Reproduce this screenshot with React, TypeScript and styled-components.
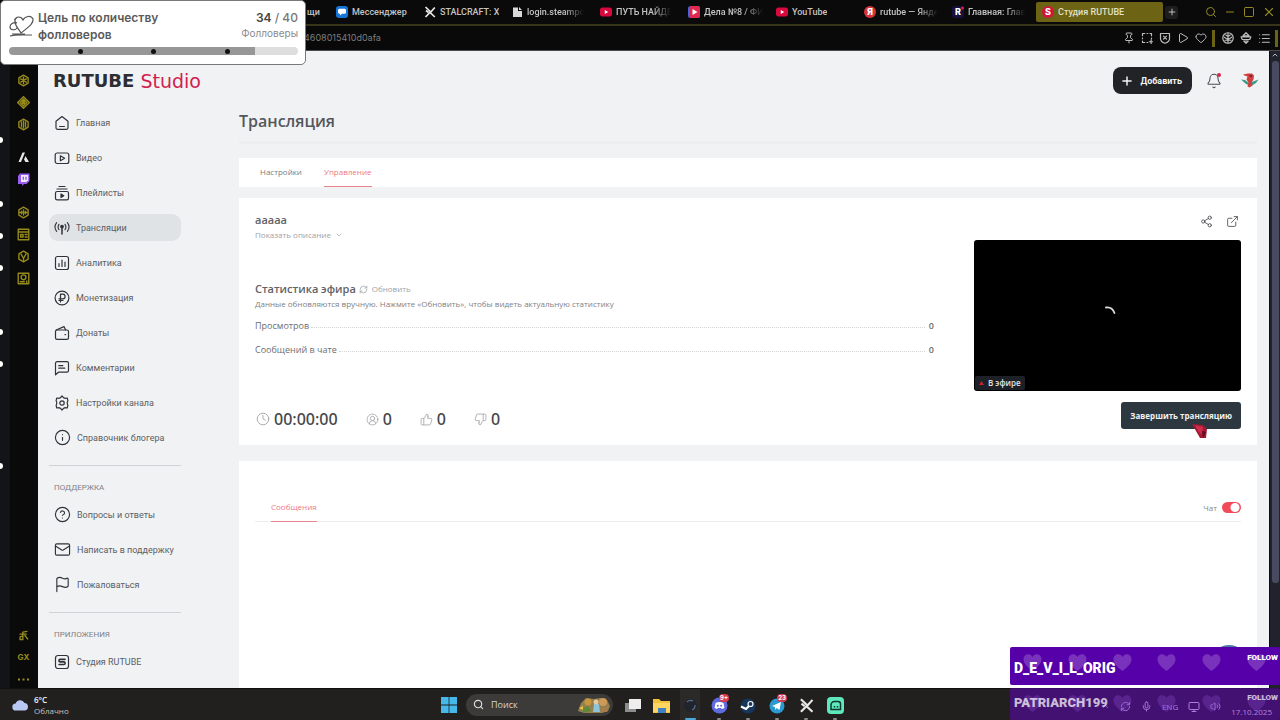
import React from 'react';
import styled, { createGlobalStyle, css } from 'styled-components';
import {
  Plus, Search, Minus, Square, X, Pin, Play, Heart, List, Mail, Flag, Info, CircleHelp,
  Share2, ExternalLink, ChevronDown, ChevronUp, RefreshCw, Clock, CircleUserRound, ThumbsUp, ThumbsDown,
  Bell, Mic, Monitor, Volume2,
} from 'lucide-react';

const ui = "Roboto, 'Liberation Sans', sans-serif";
const text = "'Open Sans', 'Noto Sans', sans-serif";
const inter = "Inter, 'Liberation Sans', sans-serif";

const Global = createGlobalStyle`
  * { box-sizing: border-box; }
  body { margin: 0; background: #0a0a0a; }
  button { border: 0; background: none; padding: 0; font: inherit; color: inherit; cursor: pointer; }
  a { color: inherit; text-decoration: none; }
  ul, h1, h2, h3, p, dl, dd { margin: 0; padding: 0; list-style: none; font-weight: inherit; }
  svg { display: block; flex: none; }
`;

const Screen = styled.div`
  position: relative;
  display: flex;
  flex-direction: column;
  height: 100vh;
  overflow: hidden;
  font-family: ${ui};
`;

/* ---------- browser chrome ---------- */

const TabStrip = styled.nav`
  display: flex;
  align-items: center;
  flex: none;
  height: 26px;
  padding: 0 4px 0 242px;
  background: #0a0a0a;
  border-bottom: 2px solid #37341a;
`;

const BrowserTab = styled.a<{ $active?: boolean; $end?: boolean }>`
  display: flex;
  align-items: center;
  gap: 4px;
  flex: none;
  width: ${p => (p.$active ? 127 : 88)}px;
  height: 20px;
  padding: 0 ${p => (p.$end ? 10 : 6)}px;
  justify-content: ${p => (p.$end ? 'flex-end' : 'flex-start')};
  margin-left: ${p => (p.$active ? 2 : 0)}px;
  border-radius: 2px;
  background: ${p => (p.$active ? '#6c6314' : 'transparent')};
  color: ${p => (p.$active ? '#e4e0c4' : '#c4c4c4')};
  font: 500 9px/12px ${ui};
`;

const TabLabel = styled.span<{ $fade?: boolean }>`
  overflow: hidden;
  white-space: nowrap;
  ${p => p.$fade && css`mask-image: linear-gradient(90deg, #000 65%, transparent 98%);`}
`;

const NewTab = styled.button`
  display: grid;
  place-items: center;
  width: 13px;
  height: 13px;
  margin-left: 2px;
  border-radius: 3px;
  background: #1d1d1d;
  color: #d8d8d8;
`;

const WindowControls = styled.div`
  display: flex;
  align-items: center;
  gap: 7px;
  margin-left: auto;
  color: #948a1f;
`;

const AddressBar = styled.div`
  display: flex;
  align-items: center;
  flex: none;
  height: 25px;
  padding: 0 2px 0 304px;
  background: #090909;
  border-bottom: 1px solid #4a4b4d;
  color: #7d7d7d;
  font: 400 9px/12px ${inter};
`;

const AddressTools = styled.div`
  display: flex;
  align-items: center;
  gap: 6px;
  margin-left: auto;
  color: #bdbdbd;
`;

const ToolSplit = styled.span`
  width: 3px;
  height: 17px;
  margin: 0 1px 0 -1px;
  background: #6b6316;
  &:last-child { margin: 0 0 0 -2px; }
`;

const Work = styled.div`
  display: flex;
  flex: 1;
  min-height: 0;
`;

const Edge = styled.div`
  flex: none;
  width: 10px;
  padding-top: 86px;
  background: #131417;
`;

const EdgeDot = styled.div<{ $gap: number }>`
  width: 3px;
  height: 6px;
  margin-bottom: ${p => p.$gap}px;
  border-radius: 0 3px 3px 0;
  background: #fff;
`;

const Rail = styled.aside`
  display: flex;
  flex-direction: column;
  align-items: center;
  flex: none;
  width: 28px;
  padding: 23px 1px 2px 0;
  background: #0a0a0a;
  color: #968c1c;
`;

const RailGroup = styled.div<{ $bottom?: boolean }>`
  display: flex;
  flex-direction: column;
  gap: 9px;
  margin: ${p => (p.$bottom ? 'auto 0 0' : '0 0 20px')};
`;

const RailButton = styled.button`
  display: grid;
  place-items: center;
  width: 13px;
  height: 13px;
  font: 700 8px/13px ${inter};
`;

const ScrollTrack = styled.div`
  display: flex;
  flex-direction: column;
  align-items: center;
  flex: none;
  width: 11px;
  background: #20222c;
  border-left: 1px solid #0b0c10;
  color: #b5b5bd;
`;

const ScrollThumb = styled.div`
  width: 7px;
  height: 522px;
  margin-top: 2px;
  border-radius: 3px;
  background: #484a60;
`;

/* ---------- studio page ---------- */

const Page = styled.div`
  position: relative;
  display: flex;
  flex: 1;
  min-width: 0;
  background: #f1f2f4;
  color: #5c5e63;
`;

const SideNav = styled.nav`
  display: flex;
  flex-direction: column;
  flex: none;
  width: 201px;
  padding: 20px 58px 0 11px;
`;

const Logo = styled.a`
  display: flex;
  align-items: center;
  height: 20px;
  padding-left: 4px;
  margin-bottom: 18px;
  font-family: 'DejaVu Sans', sans-serif;
  line-height: 20px;
  white-space: nowrap;
  color: #2c2e33;
`;
const LogoMain = styled.span`font-size: 18px; font-weight: 700;`;
const LogoDot = styled.span`
  width: 3px;
  height: 3px;
  margin: 0 4px 12px 2px;
  background: #d0214f;
`;
const LogoSub = styled.span`font-size: 19px; color: #d0214f;`;

const NavList = styled.ul`
  display: flex;
  flex-direction: column;
  gap: 8px;
`;

const NavItem = styled.a<{ $active?: boolean }>`
  display: flex;
  align-items: center;
  gap: 6px;
  height: 27px;
  padding-left: 5px;
  border-radius: 9px;
  white-space: nowrap;
  font-size: 9px;
  background: ${p => (p.$active ? '#dfe3e6' : 'transparent')};
  svg { color: #303238; }
`;

const NavHeading = styled.h3`
  margin: 16px 0 7px;
  padding: 0 5px;
  font-size: 8px;
  line-height: 12px;
  color: #7f8186;
`;

const NavRule = styled.hr`
  width: 100%;
  height: 1px;
  margin: 14px 0 0;
  border: 0;
  background: #d0d2d6;
`;

const Main = styled.main`
  display: flex;
  flex-direction: column;
  flex: 1;
  min-width: 0;
  padding: 16px 12px 0 0;
`;

const TopBar = styled.header`
  display: flex;
  align-items: center;
  justify-content: flex-end;
  gap: 18px;
  height: 27px;
  margin-right: -2px;
`;

const AddButton = styled.button`
  display: flex;
  align-items: center;
  gap: 6px;
  height: 27px;
  margin-right: -5px;
  padding: 0 10px 0 7px;
  border-radius: 8px;
  background: #212327;
  color: #f5f5f5;
  font: 700 9px/14px ${ui};
`;

const IconButton = styled.button`
  display: grid;
  place-items: center;
  position: relative;
  width: 18px;
  height: 18px;
  color: #4c4e54;
`;

const BellDot = styled.span`
  position: absolute;
  top: 1px;
  right: 2px;
  width: 4px;
  height: 4px;
  border-radius: 50%;
  background: #d32747;
`;

const PageTitle = styled.h1`
  margin-top: 15px;
  padding-bottom: 8px;
  border-bottom: 3px solid #edeef0;
  font: 600 16px/24px ${text};
  color: #55575c;
`;

const Card = styled.section`
  background: #fff;
  font-family: ${text};
`;

const TabCard = styled(Card)`
  display: flex;
  gap: 22px;
  margin-top: 14px;
  height: 29px;
  padding: 0 21px;
`;

const PageTab = styled.button<{ $active?: boolean }>`
  height: 29px;
  font: 400 8px/12px ${text};
  color: ${p => (p.$active ? '#ee7a82' : '#7a7c80')};
  border-bottom: 1px solid ${p => (p.$active ? '#e8858c' : 'transparent')};
`;

const StreamCard = styled(Card)`
  display: flex;
  gap: 40px;
  margin-top: 11px;
  padding: 14px 16px;
`;

const Details = styled.div`
  flex: 1;
  min-width: 0;
`;

const StreamName = styled.h2`
  font: 600 11px/16px ${text};
  color: #606266;
`;

const Quiet = styled.button`
  display: flex;
  align-items: center;
  gap: 4px;
  font: 400 8px/14px ${text};
  color: #a0a2a6;
`;

const StatHead = styled.div`
  display: flex;
  align-items: center;
  gap: 3px;
  margin-top: 39px;
  h3 { font: 600 11px/16px ${text}; color: #606266; }
`;

const Hint = styled.p`
  font-size: 8px;
  line-height: 14px;
  color: #7f8185;
`;

const Stats = styled.dl`
  display: flex;
  flex-direction: column;
  gap: 4px;
  margin-top: 4px;
`;

const StatRow = styled.div`
  display: flex;
  align-items: center;
  height: 20px;
  font-size: 9px;
  color: #6c6e72;
`;

const Leader = styled.span`
  flex: 1;
  height: 6px;
  margin: 0 4px 0 2px;
  border-bottom: 1px dotted #d2d4d6;
`;

const StatValue = styled.dd`
  font-weight: 600;
`;

const Metrics = styled.div`
  display: flex;
  gap: 28px;
  margin-top: 48px;
  padding-left: 1px;
`;

const Metric = styled.span`
  display: flex;
  align-items: center;
  gap: 4px;
  font: 500 16px/24px 'Noto Sans', ${text};
  color: #45474b;
  svg { color: #a2a4a8; }
`;

const PreviewCol = styled.div`
  display: flex;
  flex-direction: column;
  align-items: flex-end;
  flex: none;
  width: 267px;
`;

const PreviewTools = styled.div`
  display: flex;
  gap: 8px;
  height: 28px;
`;

const Player = styled.div`
  position: relative;
  display: grid;
  place-items: center;
  width: 100%;
  height: 151px;
  padding: 0 0 9px 4px;
  border-radius: 3px;
  background: #000;
`;

const LiveBadge = styled.span`
  position: absolute;
  left: 1px;
  bottom: 1px;
  display: flex;
  align-items: center;
  gap: 3px;
  height: 14px;
  padding: 0 4px 0 3px;
  border-radius: 2px;
  background: #1d2026;
  color: #e2e2e2;
  font: 600 8px/14px ${text};
`;

const StopButton = styled.button`
  height: 27px;
  margin-top: 11px;
  padding: 0 9px;
  border-radius: 3px;
  background: #2c373f;
  color: #f0f2f3;
  font: 700 8px/14px ${text};
  white-space: nowrap;
`;

const ChatCard = styled(Card)`
  flex: 1;
  margin-top: 16px;
  padding: 32px 16px 0;
`;

const ChatHead = styled.div`
  display: flex;
  justify-content: space-between;
  padding-left: 16px;
  border-bottom: 1px solid #eceded;
`;

const ChatTab = styled(PageTab)`
  margin-bottom: -1px;
`;

const Toggle = styled.label`
  display: flex;
  align-items: center;
  gap: 5px;
  font-size: 8px;
  color: #86888c;
  input {
    appearance: none;
    width: 19px;
    height: 11px;
    margin: 0;
    border-radius: 6px;
    background: radial-gradient(circle at 13px 50%, #fff 4px, #ef4b59 5px);
  }
`;

const HelpBubble = styled.button`
  position: absolute;
  right: 22px;
  bottom: 7px;
  width: 36px;
  height: 36px;
  border-radius: 50%;
  background: #4f7aa8;
`;

/* ---------- taskbar ---------- */

const Taskbar = styled.footer`
  display: grid;
  grid-template-columns: 1fr auto 1fr;
  align-items: center;
  flex: none;
  height: 32px;
  padding: 0 8px 0 12px;
  background: #22201f;
  border-top: 1px solid #111;
  font-family: ${text};
`;

const Weather = styled.div`
  display: flex;
  align-items: center;
  gap: 5px;
  font-size: 8px;
  line-height: 11px;
  color: #c2c2c2;
  strong { display: block; font-weight: 600; color: #f2f2f2; }
`;

const Dock = styled.div`
  display: flex;
  align-items: center;
  gap: 9px;
  padding-left: 2px;
`;

const DockSearch = styled.label`
  display: flex;
  align-items: center;
  gap: 7px;
  width: 147px;
  height: 22px;
  padding: 0 2px 0 7px;
  border-radius: 11px;
  background: #3d3b3a;
  color: #dedede;
  input {
    flex: 1;
    min-width: 0;
    padding: 0;
    border: 0;
    background: none;
    outline: 0;
    font: 400 9px/14px ${text};
    color: #dedede;
    &::placeholder { color: #d4d4d4; opacity: 1; }
  }
`;

const DockApps = styled.div`
  display: flex;
  gap: 9px;
`;

const DockApp = styled.button<{ $mark?: 'dot' | 'active' }>`
  position: relative;
  display: grid;
  place-items: center;
  width: 20px;
  height: 31px;
  padding-top: 2px;
  background: ${p => (p.$mark === 'active' ? '#2b2a29' : 'transparent')};
  &::after {
    content: '';
    position: absolute;
    bottom: 0;
    width: ${p => (p.$mark === 'active' ? 11 : 4)}px;
    height: 2px;
    border-radius: 1px;
    background: ${p => (p.$mark === 'active' ? '#4aa9d8' : p.$mark ? '#8b8b8b' : 'transparent')};
  }
`;

const Count = styled.span`
  position: absolute;
  top: 5px;
  right: 0;
  padding: 0 1px;
  border-radius: 4px;
  background: #d83a4c;
  color: #fff;
  font: 700 6px/8px ${inter};
`;

const Tray = styled.div`
  display: flex;
  align-items: center;
  align-self: stretch;
  justify-content: flex-end;
  gap: 10px;
  padding-top: 4px;
  color: #fff;
  font-size: 8px;
`;

const TrayDate = styled.time`
  align-self: flex-end;
  padding-bottom: 2px;
  line-height: 12px;
`;

/* ---------- stream overlays ---------- */

const Goal = styled.section`
  position: absolute;
  top: 0;
  left: 0;
  width: 306px;
  height: 65px;
  padding: 8px 7px 0 8px;
  border: 1px solid #77797b;
  border-radius: 5px;
  background: #fff;
  font: 500 12px/17px ${inter};
  color: #5a5a5a;
`;

const GoalRow = styled.div`
  display: flex;
  gap: 3px;
`;

const GoalTitle = styled.p`
  flex: 1;
  font-weight: 600;
`;

const GoalCount = styled.p`
  text-align: right;
  color: #777;
  strong { font-weight: 600; color: #444; }
  small { display: block; font-size: 10px; line-height: 15px; font-weight: 400; color: #8a8a8a; }
`;

const GoalBar = styled.div`
  display: flex;
  align-items: center;
  justify-content: space-evenly;
  height: 8px;
  margin-top: 4px;
  border-radius: 4px;
  background: linear-gradient(90deg, #979797 85%, #dedede 85%);
`;

const GoalMark = styled.span`
  width: 5px;
  height: 5px;
  border-radius: 50%;
  background: #111;
`;

const Alerts = styled.section`
  position: absolute;
  right: 0;
  bottom: 0;
  width: 270px;
  display: flex;
  flex-direction: column;
  gap: 3px;
  font-family: ${ui};
`;

const Alert = styled.article<{ $fading?: boolean }>`
  position: relative;
  display: flex;
  align-items: flex-start;
  justify-content: space-between;
  height: ${p => (p.$fading ? 32 : 38)}px;
  padding: 4px 2px 0 4px;
  border-radius: 2px;
  color: ${p => (p.$fading ? 'rgba(255,255,255,.72)' : '#fff')};
  background: ${p => (p.$fading ? 'rgba(96,4,190,.52)' : '#5500a8')};
`;

const AlertName = styled.strong<{ $low?: boolean }>`
  position: relative;
  font-size: ${p => (p.$low ? 14 : 13)}px;
  font-weight: 900;
  line-height: 18px;
  padding-top: ${p => (p.$low ? 8 : 2)}px;
`;

const AlertKind = styled.b<{ $tight?: boolean }>`
  position: relative;
  font-size: 8px;
  font-weight: 900;
  line-height: ${p => (p.$tight ? 12 : 14)}px;
`;

const Hearts = styled.span<{ $faint?: boolean }>`
  position: absolute;
  inset: 6px 14px auto 13px;
  display: flex;
  justify-content: space-between;
  color: #8848c4;
  opacity: ${p => (p.$faint ? 0.35 : 0.7)};
`;

const Pointer = styled.svg`
  position: absolute;
  left: 1190px;
  top: 422px;
`;

/* ---------- drawings ---------- */

const Line: React.FC<{ size?: number; w?: number; children: React.ReactNode }> = ({ size = 16, w = 1.2, children }) => (
  <svg width={size} height={size} viewBox="0 0 16 16" fill="none" stroke="currentColor" strokeWidth={w} strokeLinecap="round" strokeLinejoin="round">
    {children}
  </svg>
);

const HomeIcon = () => <Line><path d="M2 6.2 8 1.6l6 4.6v6.6a1.6 1.6 0 0 1-1.6 1.6H3.6A1.6 1.6 0 0 1 2 12.8zM5.6 11.500h4.8" /></Line>;
const VideoIcon = () => <Line><rect x="1.200" y="3" width="13.600" height="10.500" rx="2" /><path d="M6.400 5.800v5l4.200-2.500z" /></Line>;
const PlaylistIcon = () => <Line><path d="M5 1.500h6M3 4h10" /><rect x="1.500" y="6.500" width="13" height="8.300" rx="1.600" /><path d="M7 9v3.400L9.800 10.700z" fill="currentColor" /></Line>;
const CastIcon = () => (
  <Line w={1.1}>
    <path d="M2.600 2.600a7.400 7.400 0 0 0 0 8.800M13.400 2.600a7.400 7.400 0 0 1 0 8.800M5 4.400a4.400 4.400 0 0 0 0 5.200M11 4.400a4.400 4.400 0 0 1 0 5.200" />
    <path d="M8 7v7" strokeWidth="1.500" />
    <circle cx="8" cy="6.600" r="1.300" fill="currentColor" />
  </Line>
);
const ChartIcon = () => <Line><rect x="1.500" y="1.500" width="13" height="13" rx="2" /><path d="M5 8.500v3M8 5v6.500M11 7v4.500" /></Line>;
const RubleIcon = () => <Line><circle cx="8" cy="8" r="6.900" /><path d="M6.500 12V4.200h2.300a2.200 2.200 0 0 1 0 4.600H5M5 10.500h4" /></Line>;
const WalletIcon = () => <Line><rect x="1.500" y="5" width="13" height="9.300" rx="1.600" /><path d="M2.200 5 10 1.600 11.600 5M11 9.600h.6" /></Line>;
const CommentIcon = () => <Line><path d="M1.500 14.800V3.200a1.600 1.600 0 0 1 1.600-1.600h9.800a1.600 1.600 0 0 1 1.600 1.600v7.400a1.600 1.600 0 0 1-1.600 1.600H4.500zM4.800 5.700h4M4.800 8.200h6" /></Line>;
const GearIcon = () => (
  <Line>
    <path d="M6.500 2.600 8 1l1.500 1.600 1.300.7 2.400-.3.700 2.600-.6 1.500v1.800l.6 1.500-.7 2.600-2.400-.3-1.300.7L8 15l-1.500-1.600-1.300-.7-2.400.3-.7-2.600.6-1.500V7.100l-.6-1.500.7-2.600 2.400.3z" />
    <circle cx="8" cy="8" r="2.200" />
  </Line>
);
const StudioIcon = () => <Line><rect x="1.500" y="1.500" width="13" height="13" rx="2.500" /><path d="M11 5.400H6.200a1.200 1.200 0 0 0 0 2.500h3.600a1.200 1.200 0 0 1 0 2.600H5" strokeWidth="1.600" /></Line>;

const YtIcon = () => <svg width="12" height="12" viewBox="0 0 12 12"><rect y="1.500" width="12" height="9" rx="2.500" fill="#d8093c" /><path d="M4.800 4v4l3.400-2z" fill="#fff" /></svg>;
const ChatAppIcon = () => <svg width="12" height="12" viewBox="0 0 12 12"><rect width="12" height="12" rx="3" fill="#1676d8" /><path d="M3.500 2.800h5a1.500 1.500 0 0 1 1.500 1.500v2a1.500 1.500 0 0 1-1.500 1.500H6L4 9.500V7.800a1.800 1.800 0 0 1-2-1.500v-2a1.500 1.500 0 0 1 1.500-1.500z" fill="#fff" /></svg>;
const CrossIcon = ({ size = 12 }: { size?: number }) => <svg width={size} height={size} viewBox="0 0 12 12"><path d="M1.500 1 6.800 6l4-4.500M10.800 11 6 6.500 1.500 11M2 4.500l2.500 2" stroke="#e8e8e8" strokeWidth="1.700" fill="none" /></svg>;
const FileIcon = () => <svg width="11" height="12" viewBox="0 0 11 12"><path d="M1 1.500h5V5h4v6H1zM7 1l3 3H7z" fill="#d8d8d8" /></svg>;
const FilmIcon = () => <svg width="12" height="12" viewBox="0 0 12 12"><rect width="12" height="12" rx="2.500" fill="#4a63d8" /><rect x="1.500" width="10.500" height="12" rx="2.500" fill="#e02850" /><path d="M4.500 3v6l5-3z" fill="#fff" /></svg>;
const RoundLetter = ({ fill, square, letter }: { fill: string; square?: boolean; letter: string }) => (
  <svg width="12" height="12" viewBox="0 0 12 12"><rect width="12" height="12" rx={square ? 3 : 6} fill={fill} /><text x="6" y="9.300" textAnchor="middle" fontFamily="Inter" fontWeight="800" fontSize="9" fill="#fff">{letter}</text>{square && <circle cx="10.500" cy="2" r="1.500" fill="#e0203c" />}</svg>
);

const Hex = <path d="M8 1.500 13.700 4.800v6.400L8 14.500l-5.700-3.300V4.800z" />;
const railTop = [
  <Line size={13} w={1.7}>{Hex}<path d="M8 4v8M4.500 6l7 4M11.500 6l-7 4" /></Line>,
  <Line size={13} w={1.7}><path d="M8 .8 15.200 8 8 15.200.800 8z" /><path d="M8 3.800 12.200 8 8 12.200 3.800 8z" /><circle cx="8" cy="8" r="1.600" fill="currentColor" /></Line>,
  <Line size={13} w={1.7}>{Hex}<path d="M8 3.500v9M5.500 5v6M10.500 5v6" /></Line>,
];
const railApps = [
  <svg width="13" height="13" viewBox="0 0 13 13"><path d="M5.500 1.500h2.500L4 11H1.500zM8.500 5l3.500 6H8.500L7 8.500z" fill="#e8e8e8" /></svg>,
  <svg width="13" height="13" viewBox="0 0 13 13"><path d="M3 .5h9.500V8L9.500 11H7l-2 2v-2H1V3z" fill="#9a5cf0" /><path d="M4 2h7.200v5.500L9 9H4z" fill="#f0e8ff" /><path d="M6.300 3.700v3M9 3.700v3" stroke="#7a3ad8" strokeWidth="1.100" /></svg>,
];
const railTools = [
  <Line size={13} w={1.7}>{Hex}<path d="M3 8h10M8 5v6M5.500 6.500v3M10.500 6.500v3" /></Line>,
  <Line size={13} w={1.7}><rect x="1.500" y="1.500" width="13" height="13" /><path d="M2 5h12M4.500 8h3v3h-3zM10 8h2.500M10 11h2.500" /></Line>,
  <Line size={13} w={1.7}>{Hex}<path d="M5 5l3 5.500L11 5M8 10.500V13" /></Line>,
  <Line size={13} w={1.7}><rect x="1.500" y="1.500" width="13" height="13" /><circle cx="8" cy="6.500" r="3" /><path d="M4 12h5M12 11v2" /></Line>,
];
const railBottom = [
  <Line size={11} w={2}><path d="M7 12V3l6-1M3 6h9M10 8l4 5M6 9l-3 1v4h4v-3" /></Line>,
  'GX',
  <svg width="11" height="3" viewBox="0 0 11 3"><path d="M0 .5h2v2H0zM4.500.5h2v2h-2zM9 .5h2v2H9z" fill="currentColor" /></svg>,
];

const HeartShape = () => (
  <svg width="19" height="19" viewBox="0 0 19 19"><path d="M9.500 18C4 13.500.500 10.500.500 6.200.500 3.200 2.600 1.200 5.100 1.200c1.900 0 3.400 1 4.400 2.700 1-1.700 2.500-2.700 4.400-2.700 2.500 0 4.600 2 4.600 5 0 4.300-3.500 7.300-9 11.800z" fill="currentColor" /></svg>
);

/* ---------- data ---------- */

const browserTabs: { icon: React.ReactNode; label: string; fade?: boolean }[] = [
  { icon: <ChatAppIcon />, label: 'Мессенджер' },
  { icon: <CrossIcon />, label: 'STALCRAFT: X' },
  { icon: <FileIcon />, label: 'login.steampo', fade: true },
  { icon: <YtIcon />, label: 'ПУТЬ НАЙДЕ', fade: true },
  { icon: <FilmIcon />, label: 'Дела №8 / ФИ', fade: true },
  { icon: <YtIcon />, label: 'YouTube' },
  { icon: <RoundLetter fill="#d8323c" letter="Я" />, label: 'rutube — Янде', fade: true },
  { icon: <RoundLetter fill="#17103c" square letter="R" />, label: 'Главная: Глав', fade: true },
];

const mainNav: [React.ReactNode, string][] = [
  [<HomeIcon />, 'Главная'],
  [<VideoIcon />, 'Видео'],
  [<PlaylistIcon />, 'Плейлисты'],
  [<CastIcon />, 'Трансляции'],
  [<ChartIcon />, 'Аналитика'],
  [<RubleIcon />, 'Монетизация'],
  [<WalletIcon />, 'Донаты'],
  [<CommentIcon />, 'Комментарии'],
  [<GearIcon />, 'Настройки канала'],
  [<Info size={17} strokeWidth={1.6} />, 'Справочник блогера'],
];

const supportNav: [React.ReactNode, string][] = [
  [<CircleHelp size={17} strokeWidth={1.6} />, 'Вопросы и ответы'],
  [<Mail size={17} strokeWidth={1.6} />, 'Написать в поддержку'],
  [<Flag size={17} strokeWidth={1.6} />, 'Пожаловаться'],
];

const edgeGaps = [58, 26, 26, 58, 26, 96, 0];

const NavGroup = ({ items, active }: { items: [React.ReactNode, string][]; active?: string }) => (
  <NavList>
    {items.map(([icon, label]) => (
      <li key={label}><NavItem href="#" $active={label === active}>{icon}{label}</NavItem></li>
    ))}
  </NavList>
);

const RailButtons = ({ items, bottom }: { items: React.ReactNode[]; bottom?: boolean }) => (
  <RailGroup $bottom={bottom}>
    {items.map((icon, i) => <RailButton key={i}>{icon}</RailButton>)}
  </RailGroup>
);

export default function App() {
  return (
    <Screen>
      <Global />
      <TabStrip>
        <BrowserTab href="#" $end><TabLabel>щи</TabLabel></BrowserTab>
        {browserTabs.map((t, i) => (
          <BrowserTab href="#" key={i}>{t.icon}<TabLabel $fade={t.fade}>{t.label}</TabLabel></BrowserTab>
        ))}
        <BrowserTab href="#" $active><RoundLetter fill="#d0143c" letter="S" /><TabLabel>Студия RUTUBE</TabLabel></BrowserTab>
        <NewTab aria-label="Новая вкладка"><Plus size={10} /></NewTab>
        <WindowControls>
          <button aria-label="Поиск"><Search size={12} /></button>
          <button aria-label="Свернуть"><Minus size={12} /></button>
          <button aria-label="Развернуть"><Square size={12} /></button>
          <button aria-label="Закрыть"><X size={14} /></button>
        </WindowControls>
      </TabStrip>
      <AddressBar>
        4608015410d0afa
        <AddressTools>
          <Pin size={12} />
          <Line size={12} w={1.6}><path d="M2 5V2h3M8 2h1M12 2h2v3M14 8v1M2 8v1M2 12v2h3M8 14h1M11 13h5M13.500 10.500v5" /></Line>
          <Line size={12} w={1.6}><path d="M2 2h12v7c0 3-3 5-6 6-3-1-6-3-6-6zM6 5.500l4 4M10 5.500l-4 4" /></Line>
          <Play size={12} />
          <Heart size={12} />
          <ToolSplit />
          <Line size={12} w={1.6}><circle cx="8" cy="8" r="7" /><path d="M8 1.500v13M3 7l5 3 5-3M4 11h8M5 4l3 2 3-2" /></Line>
          <Line size={12} w={1.6}><path d="M8 1 12 5H4zM1.500 6.500h13L13 10H3zM5 12h6l-3 3z" /></Line>
          <List size={13} />
          <ToolSplit />
        </AddressTools>
      </AddressBar>

      <Work>
        <Edge>{edgeGaps.map((gap, i) => <EdgeDot key={i} $gap={gap} />)}</Edge>
        <Rail>
          <RailButtons items={railTop} />
          <RailButtons items={railApps} />
          <RailButtons items={railTools} />
          <RailButtons items={railBottom} bottom />
        </Rail>

        <Page>
          <SideNav>
            <Logo href="#"><LogoMain>RUTUBE</LogoMain><LogoDot /><LogoSub>Studio</LogoSub></Logo>
            <NavGroup items={mainNav} active="Трансляции" />
            <NavRule />
            <NavHeading>ПОДДЕРЖКА</NavHeading>
            <NavGroup items={supportNav} />
            <NavRule />
            <NavHeading>ПРИЛОЖЕНИЯ</NavHeading>
            <NavGroup items={[[<StudioIcon />, 'Студия RUTUBE']]} />
          </SideNav>

          <Main>
            <TopBar>
              <AddButton><Plus size={14} strokeWidth={2.5} />Добавить</AddButton>
              <IconButton aria-label="Уведомления"><Bell size={16} strokeWidth={1.6} /><BellDot /></IconButton>
              <IconButton aria-label="Профиль">
                <svg width="18" height="18" viewBox="0 0 18 18">
                  <path d="M0 7.500 4 8l4 3 9.500-3.500L15 11l-5 3-5-2z" fill="#3c9a86" />
                  <path d="M2 2.500 7 1.500h4l2 2-.5 4-2 3 1 3-3 2-2-1 1-4-2-3 1-3-3-1z" fill="#cf3f3d" />
                  <path d="M8 3h3v2H9z" fill="#7d2530" />
                </svg>
              </IconButton>
            </TopBar>
            <PageTitle>Трансляция</PageTitle>
            <TabCard>
              <PageTab>Настройки</PageTab>
              <PageTab $active>Управление</PageTab>
            </TabCard>

            <StreamCard>
              <Details>
                <StreamName>ааааа</StreamName>
                <Quiet>Показать описание <ChevronDown size={8} /></Quiet>
                <StatHead>
                  <h3>Статистика эфира</h3>
                  <Quiet><RefreshCw size={9} />Обновить</Quiet>
                </StatHead>
                <Hint>Данные обновляются вручную. Нажмите «Обновить», чтобы видеть актуальную статистику</Hint>
                <Stats>
                  <StatRow><dt>Просмотров</dt><Leader /><StatValue>0</StatValue></StatRow>
                  <StatRow><dt>Сообщений в чате</dt><Leader /><StatValue>0</StatValue></StatRow>
                </Stats>
                <Metrics>
                  <Metric><Clock size={14} strokeWidth={1.5} />00:00:00</Metric>
                  <Metric><CircleUserRound size={13} strokeWidth={1.5} />0</Metric>
                  <Metric><ThumbsUp size={13} strokeWidth={1.5} />0</Metric>
                  <Metric><ThumbsDown size={13} strokeWidth={1.5} />0</Metric>
                </Metrics>
              </Details>
              <PreviewCol>
                <PreviewTools>
                  <IconButton aria-label="Поделиться"><Share2 size={13} strokeWidth={1.6} /></IconButton>
                  <IconButton aria-label="Открыть"><ExternalLink size={13} strokeWidth={1.6} /></IconButton>
                </PreviewTools>
                <Player>
                  <svg width="14" height="14" viewBox="0 0 14 14"><path d="M3 3.500Q9 2.500 11.500 9" stroke="#ddd" strokeWidth="1.800" fill="none" strokeLinecap="round" /></svg>
                  <LiveBadge><svg width="7" height="6" viewBox="0 0 7 6"><path d="M3.500 1 6 5H1z" fill="#c8202c" /></svg>В эфире</LiveBadge>
                </Player>
                <StopButton>Завершить трансляцию</StopButton>
              </PreviewCol>
            </StreamCard>

            <ChatCard>
              <ChatHead>
                <ChatTab $active>Сообщения</ChatTab>
                <Toggle>Чат<input type="checkbox" defaultChecked /></Toggle>
              </ChatHead>
            </ChatCard>
          </Main>
          <HelpBubble aria-label="Помощь" />
        </Page>
        <ScrollTrack><ChevronUp size={8} strokeWidth={3} /><ScrollThumb /></ScrollTrack>
      </Work>

      <Taskbar>
        <Weather>
          <svg width="17" height="12" viewBox="0 0 17 12"><path d="M4 11.500a3.500 3.500 0 0 1-.3-7A4.800 4.800 0 0 1 12.500 4a3.800 3.800 0 0 1 .5 7.500z" fill="#b9c8f4" /></svg>
          <div><strong>6°C</strong>Облачно</div>
        </Weather>
        <Dock>
          <button aria-label="Пуск">
            <svg width="16" height="16" viewBox="0 0 16 16"><path d="M0 0h7.600v7.600H0zM8.400 0H16v7.600H8.400zM0 8.400h7.600V16H0zM8.400 8.400H16V16H8.400z" fill="#45b9ea" /></svg>
          </button>
          <DockSearch>
            <Search size={11} strokeWidth={2.5} />
            <input placeholder="Поиск" aria-label="Поиск" />
            <svg width="34" height="18" viewBox="0 0 34 18">
              <path d="M1 15 4 7l5-5 8 1 6-1 7 2 3 6-2 5-6 2H7z" fill="#94804c" />
              <circle cx="11" cy="6" r="3.500" fill="#c8963c" /><circle cx="26" cy="6" r="4" fill="#cf9a58" />
              <path d="M5 12l6-2 3 5-8 2z" fill="#5f8a3c" /><path d="M17 8h5l1 8h-7z" fill="#8cc4dc" /><circle cx="19" cy="6" r="2.500" fill="#e8c8a0" />
              <path d="M2 12l4-2v4z" fill="#f0c040" /><path d="M25 12l6-1-1 5h-5z" fill="#a87c4c" />
            </svg>
          </DockSearch>
          <DockApps>
            <DockApp aria-label="Представление задач"><svg width="17" height="15" viewBox="0 0 17 15"><rect x="1" y="5" width="11" height="9" fill="#8d8d8d" /><rect x="5" y="1" width="12" height="10" fill="#eee" /></svg></DockApp>
            <DockApp aria-label="Проводник"><svg width="17" height="15" viewBox="0 0 17 15"><path d="M0 1h6l2 2h9v12H0z" fill="#f3c23c" /><path d="M0 5h17v9H0z" fill="#fcd660" /><path d="M5 10h8v5H5z" fill="#3f7fc8" /></svg></DockApp>
            <DockApp aria-label="OBS" $mark="active"><svg width="15" height="15" viewBox="0 0 15 15"><circle cx="7.500" cy="7.500" r="6.500" fill="#20242c" /><path d="M4 4a5 5 0 0 1 6-1M12 7a5 5 0 0 1-3 5" stroke="#59708e" strokeWidth="1.200" fill="none" /></svg></DockApp>
            <DockApp aria-label="Discord" $mark="dot"><svg width="17" height="17" viewBox="0 0 17 17"><circle cx="8.500" cy="8.500" r="8" fill="#5f6ae0" /><path d="M4.500 6Q8.500 4 12.500 6l1 5-2.500 1-1-1H7l-1 1-2.500-1z" fill="#fff" /><circle cx="6.800" cy="8.800" r="1" fill="#5f6ae0" /><circle cx="10.200" cy="8.800" r="1" fill="#5f6ae0" /></svg><Count>9+</Count></DockApp>
            <DockApp aria-label="Steam" $mark="dot"><svg width="16" height="16" viewBox="0 0 16 16"><circle cx="8" cy="8" r="7.500" fill="#16365c" /><path d="M1 8.500 6 11l4-4" stroke="#fff" strokeWidth="2.200" fill="none" /><circle cx="10.500" cy="6" r="2.500" fill="#16365c" stroke="#fff" strokeWidth="1.200" /></svg></DockApp>
            <DockApp aria-label="Telegram" $mark="dot"><svg width="16" height="16" viewBox="0 0 16 16"><circle cx="8" cy="8" r="7.500" fill="#2c9ad0" /><path d="M3 8l9-4-1.500 8-3-2L6 12V9z" fill="#fff" /></svg><Count>23</Count></DockApp>
            <DockApp aria-label="STALCRAFT" $mark="dot"><CrossIcon size={15} /></DockApp>
            <DockApp aria-label="Streamlabs" $mark="dot"><svg width="17" height="17" viewBox="0 0 17 17"><rect width="17" height="17" rx="4" fill="#5fe8bc" /><path d="M4 12.500V8a3.500 3.500 0 0 1 3.500-3.500H11A2.500 2.500 0 0 1 13.500 7v5.500zM7.500 9v1.500M10.500 9v1.500" fill="none" stroke="#0d3830" strokeWidth="1.500" /></svg></DockApp>
          </DockApps>
        </Dock>
        <Tray>
          <ChevronUp size={9} />
          <RefreshCw size={11} />
          <Mic size={11} />
          <span>ENG</span>
          <Monitor size={12} />
          <Volume2 size={11} />
          <TrayDate>17.10.2025</TrayDate>
        </Tray>
      </Taskbar>

      <Goal>
        <GoalRow>
          <svg width="26" height="30" viewBox="0 0 26 30" fill="none" stroke="#555" strokeWidth="1.200">
            <path d="M12 24C9 19 5 16 6 11c1-4 6-4 8 0 2-4 8-5 10-1 1 5-6 9-12 14zM8 9C5 9 5 13 8 14c-4-1-7 1-7 4s5 4 7 1" />
            <path d="M1 27c6-2 12-1 22-1M3 25h13" />
          </svg>
          <GoalTitle>Цель по количеству<br />фолловеров</GoalTitle>
          <GoalCount><strong>34</strong> / 40<small>Фолловеры</small></GoalCount>
        </GoalRow>
        <GoalBar role="progressbar" aria-valuenow={34} aria-valuemax={40}><GoalMark /><GoalMark /><GoalMark /></GoalBar>
      </Goal>

      <Alerts>
        <Alert>
          <Hearts>{[0, 1, 2, 3, 4, 5].map(i => <HeartShape key={i} />)}</Hearts>
          <AlertName $low>D_E_V_I_L_ORIG</AlertName>
          <AlertKind>FOLLOW</AlertKind>
        </Alert>
        <Alert $fading>
          <Hearts $faint>{[0, 1, 2, 3, 4, 5].map(i => <HeartShape key={i} />)}</Hearts>
          <AlertName>PATRIARCH199</AlertName>
          <AlertKind $tight>FOLLOW</AlertKind>
        </Alert>
      </Alerts>

      <Pointer width="20" height="18" viewBox="0 0 20 18"><path d="M2 2 13 3l4 4-1 9-6 0-4-7z" fill="#a31835" /><path d="M5 3l8 2-1 8-4-4z" fill="#cf2d4c" /><path d="M12 9l4 1-3 6z" fill="#5e0f20" /></Pointer>
    </Screen>
  );
}
